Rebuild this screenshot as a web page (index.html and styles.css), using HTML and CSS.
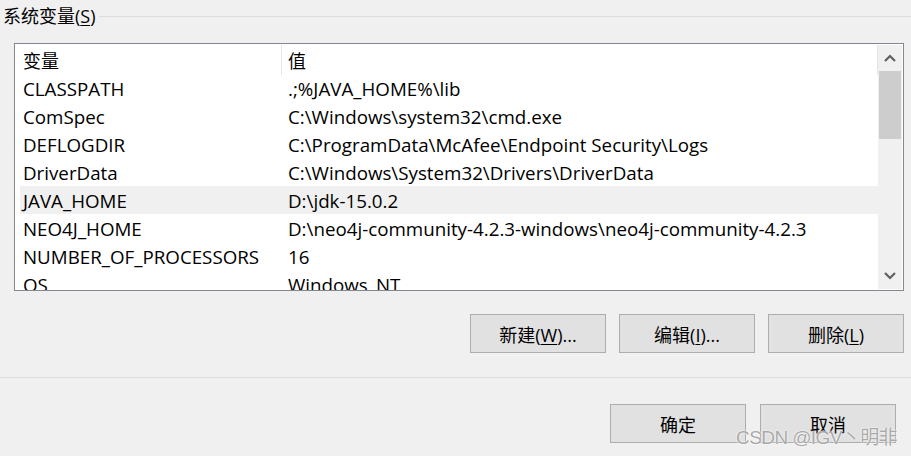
FILE: index.html
```html
<!DOCTYPE html>
<html lang="zh-CN">
<head>
<meta charset="utf-8">
<title>系统变量</title>
<link rel="stylesheet" href="styles.css">
</head>
<body>
<div class="dialog">
  <div class="legend">
    <span class="legend-text">系统变量(<u>S</u>)</span>
    <span class="legend-line"></span>
  </div>

  <div class="listbox">
    <div class="table">
      <div class="head">
        <div class="hcell c1">变量</div>
        <div class="hcell c2">值</div>
      </div>
      <div class="row"><div class="cell c1">CLASSPATH</div><div class="cell c2">.;%JAVA_HOME%\lib</div></div>
      <div class="row"><div class="cell c1">ComSpec</div><div class="cell c2">C:\Windows\system32\cmd.exe</div></div>
      <div class="row"><div class="cell c1">DEFLOGDIR</div><div class="cell c2">C:\ProgramData\McAfee\Endpoint Security\Logs</div></div>
      <div class="row"><div class="cell c1">DriverData</div><div class="cell c2">C:\Windows\System32\Drivers\DriverData</div></div>
      <div class="row selected"><div class="cell c1">JAVA_HOME</div><div class="cell c2">D:\jdk-15.0.2</div></div>
      <div class="row"><div class="cell c1">NEO4J_HOME</div><div class="cell c2">D:\neo4j-community-4.2.3-windows\neo4j-community-4.2.3</div></div>
      <div class="row"><div class="cell c1">NUMBER_OF_PROCESSORS</div><div class="cell c2">16</div></div>
      <div class="row"><div class="cell c1">OS</div><div class="cell c2">Windows_NT</div></div>
    </div>
    <div class="scrollbar">
      <div class="sb-btn">
        <svg width="12" height="8" viewBox="0 0 12 8"><path d="M1 7 L6 2 L11 7" fill="none" stroke="#606060" stroke-width="2.2"/></svg>
      </div>
      <div class="sb-thumb"></div>
      <div class="sb-track"></div>
      <div class="sb-btn">
        <svg width="12" height="8" viewBox="0 0 12 8"><path d="M1 1 L6 6 L11 1" fill="none" stroke="#606060" stroke-width="2.2"/></svg>
      </div>
    </div>
  </div>

  <div class="actions">
    <button class="btn">新建(<u>W</u>)...</button>
    <button class="btn">编辑(<u>I</u>)...</button>
    <button class="btn">删除(<u>L</u>)</button>
  </div>

  <div class="separator"></div>

  <div class="footer">
    <button class="btn">确定</button>
    <button class="btn">取消</button>
  </div>

  <div class="watermark">CSDN @IGV丶明非</div>
</div>
</body>
</html>
```

FILE: styles.css
```css
html, body {
  margin: 0;
  padding: 0;
  background: #f0f0f0;
}

body {
  font-family: "Open Sans", "Noto Sans CJK SC", sans-serif;
  font-size: 18px;
  color: #000;
  width: 911px;
  height: 456px;
  overflow: hidden;
}

.dialog {
  position: relative;
  height: 456px;
}

u {
  text-decoration: underline;
  text-underline-offset: 2px;
}

.legend {
  display: flex;
  align-items: center;
  height: 32px;
}

.legend-text {
  padding-left: 3px;
  padding-right: 3px;
  line-height: 32px;
  white-space: nowrap;
}

.legend-line {
  flex: 1;
  height: 1px;
  background: #dcdcdc;
}

.listbox {
  display: flex;
  margin: 11px 7px 0 14px;
  height: 248px;
  box-sizing: border-box;
  border: 1px solid #828790;
  background: #fff;
  overflow: hidden;
}

.table {
  flex: 1;
  overflow: hidden;
  padding-left: 5px;
  font-size: 18.75px;
}

.head {
  display: flex;
  align-items: stretch;
  border-right: 1px solid #e5e5e5;
  margin-top: 1px;
  margin-bottom: -1px;
  height: 30px;
  font-size: 18px;
}

.hcell {
  display: flex;
  align-items: center;
  white-space: nowrap;
}

.hcell.c1 {
  width: 258px;
  padding-left: 3px;
  border-right: 1px solid #e5e5e5;
}

.hcell.c2 {
  padding-left: 6px;
}

.row {
  display: flex;
  height: 28px;
  align-items: center;
  white-space: nowrap;
}

.row.selected {
  background: #f0f0f0;
}

.cell.c1 {
  width: 259px;
  padding-left: 3px;
}

.cell.c2 {
  padding-left: 6px;
}

.scrollbar {
  display: flex;
  flex-direction: column;
  width: 24px;
  margin: 1px 1px 1px 0;
  background: #f0f0f0;
}

.sb-btn {
  height: 26px;
  display: flex;
  align-items: center;
  justify-content: center;
  flex: none;
}

.sb-thumb {
  height: 68px;
  background: #cdcdcd;
  margin: 0 1px;
  flex: none;
}

.sb-track {
  flex: 1;
}

.actions {
  display: flex;
  justify-content: flex-end;
  gap: 13px;
  margin: 23px 7px 0 0;
}

.btn {
  width: 136px;
  height: 39px;
  background: #e1e1e1;
  border: 1px solid #adadad;
  border-radius: 0;
  font-family: "Open Sans", "Noto Sans CJK SC", sans-serif;
  font-size: 18px;
  color: #000;
  padding: 0;
  margin: 0;
}

.separator {
  height: 1px;
  background: #dcdcdc;
  margin-top: 24px;
}

.footer {
  display: flex;
  justify-content: flex-end;
  gap: 14px;
  margin: 26px 15px 0 0;
}

.watermark {
  position: absolute;
  right: 14px;
  bottom: 7px;
  font-family: "Liberation Sans", "Noto Sans CJK SC", sans-serif;
  font-size: 19px;
  color: rgba(140, 140, 140, 0.75);
  text-shadow: 0 0 1px #fff, 0 0 2px #fff;
  white-space: nowrap;
  letter-spacing: -0.6px;
}
```
